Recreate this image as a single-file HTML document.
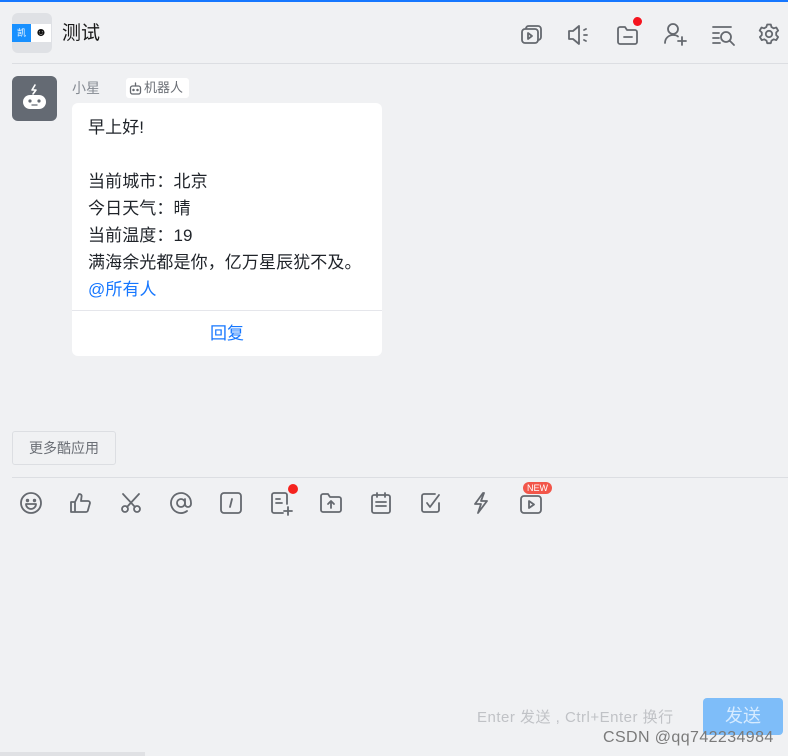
<!DOCTYPE html>
<html><head><meta charset="utf-8"><style>
*{margin:0;padding:0;box-sizing:border-box}
body{width:788px;height:756px;background:#f0f1f3;font-family:"Liberation Sans","Noto Sans CJK SC",sans-serif;position:relative;overflow:hidden}
.abs{position:absolute}
svg{fill:none;stroke:#65696f;stroke-width:1.8;stroke-linecap:round;stroke-linejoin:round}
</style></head><body>
<div class="abs" style="left:0;top:0;width:788px;height:2px;background:#1677ff"></div>
<div class="abs" style="left:12px;top:13px;width:40px;height:40px;border-radius:6px;background:#dfe1e5;overflow:hidden">
 <div class="abs" style="left:0;top:11px;width:19px;height:18px;background:#1890ff;color:#fff;font-size:9px;line-height:18px;text-align:center">凯</div>
 <div class="abs" style="left:19px;top:11px;width:20px;height:18px;background:#fff;color:#111;font-size:12px;line-height:16px;text-align:center">☻</div>
</div>
<div class="abs" style="left:62px;top:22px;font-size:19px;color:#1a1a1a;line-height:24px">测试</div>
<svg class="abs" style="left:520px;top:23px" width="24" height="24" viewBox="0 0 24 24"><rect x="2" y="6" width="16" height="14" rx="3"/><path d="M6 5 a3 3 0 0 1 3-2 h9 a3 3 0 0 1 3 3 v8 a3 3 0 0 1-3 3"/><path d="M8 10 l4 3 -4 3z"/></svg>
<svg class="abs" style="left:566px;top:23px" width="26" height="24" viewBox="0 0 26 24"><path d="M3 8h4l6-5v18l-6-5H3z"/><path d="M18 7l2-1M18 12h3M18 17l2 1"/></svg>
<svg class="abs" style="left:615px;top:23px" width="26" height="24" viewBox="0 0 26 24"><path d="M3 6a2 2 0 0 1 2-2h5l2 3h8a2 2 0 0 1 2 2v10a2 2 0 0 1-2 2H5a2 2 0 0 1-2-2z"/><path d="M9 14h8"/></svg>
<div class="abs" style="left:633px;top:17px;width:9px;height:9px;border-radius:50%;background:#f5141e"></div>
<svg class="abs" style="left:663px;top:22px" width="26" height="26" viewBox="0 0 26 26"><circle cx="10" cy="7" r="5"/><path d="M2 21c0-5 4-8 8-8 2 0 4 .5 5 1.5"/><path d="M19 15v8M15 19h8"/></svg>
<svg class="abs" style="left:711px;top:24px" width="26" height="24" viewBox="0 0 26 24"><path d="M2 3h18M2 9h6M2 14h6M2 19h7"/><circle cx="15" cy="13" r="5"/><path d="M19 17l4 4"/></svg>
<svg class="abs" style="left:757px;top:22px" width="24" height="24" viewBox="0 0 24 24"><circle cx="12" cy="12" r="3.2"/><path d="M10.2 2.5h3.6l.7 2.6 2.2 1.2 2.6-.8 1.8 3.1-1.9 1.9v2.6l1.9 1.9-1.8 3.1-2.6-.8-2.2 1.3-.7 2.6h-3.6l-.7-2.6-2.2-1.3-2.6.8-1.8-3.1 1.9-1.9v-2.6L2.7 8.6l1.8-3.1 2.6.8 2.2-1.2z"/></svg>
<div class="abs" style="left:12px;top:63px;width:776px;height:1px;background:#dcdee2"></div>
<div class="abs" style="left:12px;top:76px;width:45px;height:45px;border-radius:6px;background:#646a73">
 <svg class="abs" style="left:6px;top:6px" width="33" height="33" viewBox="0 0 33 33"><path d="M17 3l-3 5h4l-3 4" stroke="#fff" stroke-width="1.6"/><rect x="5" y="13" width="23" height="14" rx="7" fill="#fff" stroke="none"/><circle cx="12" cy="19" r="1.6" fill="#646a73" stroke="none"/><circle cx="21" cy="19" r="1.6" fill="#646a73" stroke="none"/><path d="M14 23h5" stroke="#646a73" stroke-width="1.3"/></svg>
</div>
<div class="abs" style="left:72px;top:79px;font-size:14px;color:#858a92;line-height:18px">小星</div>
<div class="abs" style="left:126px;top:78px;height:20px;width:63px;background:#fff;border-radius:3px;font-size:13px;color:#6b6f76;line-height:20px;padding-left:18px">机器人
 <svg class="abs" style="left:3px;top:4px;stroke-width:1.3" width="13" height="13" viewBox="0 0 13 13"><rect x="1.5" y="4" width="10" height="8" rx="2"/><path d="M6.5 1v3"/><circle cx="4.5" cy="8" r=".6"/><circle cx="8.5" cy="8" r=".6"/></svg></div>
<div class="abs" style="left:72px;top:103px;width:310px;height:253px;background:#fff;border-radius:6px">
 <div style="padding:11px 0 0 16px;font-size:17px;line-height:27px;color:#1f2329;letter-spacing:0.1px">早上好!<br><br>当前城市：北京<br>今日天气：晴<br>当前温度：19<br>满海余光都是你，亿万星辰犹不及。<br><span style="color:#1677ff">@所有人</span></div>
 <div class="abs" style="left:0;top:207px;width:310px;height:1px;background:#e5e6eb"></div>
 <div class="abs" style="left:0;top:219px;width:310px;text-align:center;font-size:17px;color:#1677ff;line-height:24px">回复</div>
</div>
<div class="abs" style="left:12px;top:431px;width:104px;height:34px;border:1px solid #dcdee2;border-radius:3px;font-size:14px;color:#6b6f76;line-height:32px;text-align:center">更多酷应用</div>
<div class="abs" style="left:12px;top:477px;width:776px;height:1px;background:#dcdee2"></div>
<svg class="abs" style="left:19px;top:491px" width="24" height="24" viewBox="0 0 24 24"><circle cx="12" cy="12" r="10"/><circle cx="8.5" cy="9.5" r=".8"/><circle cx="15.5" cy="9.5" r=".8"/><path d="M7 13h10a5 5 0 0 1-10 0z"/></svg>
<svg class="abs" style="left:69px;top:491px" width="24" height="24" viewBox="0 0 24 24"><path d="M2 11h4v10H2zM6 11l4-8c2 0 3 1 2.5 3L12 10h7a2 2 0 0 1 2 2l-2 7a2 2 0 0 1-2 2H6"/></svg>
<svg class="abs" style="left:119px;top:491px" width="24" height="24" viewBox="0 0 24 24"><circle cx="6" cy="18" r="3"/><circle cx="18" cy="18" r="3"/><path d="M4 3l12 13M20 3L8 16"/></svg>
<svg class="abs" style="left:169px;top:491px" width="24" height="24" viewBox="0 0 24 24"><circle cx="12" cy="12" r="4"/><path d="M16 8v5a3 3 0 0 0 6 0v-1a10 10 0 1 0-4 8"/></svg>
<svg class="abs" style="left:219px;top:491px" width="24" height="24" viewBox="0 0 24 24"><rect x="2" y="2" width="20" height="20" rx="3"/><path d="M13 8l-2 8"/></svg>
<svg class="abs" style="left:269px;top:491px" width="24" height="26" viewBox="0 0 24 26"><path d="M14 22H5a2 2 0 0 1-2-2V4a2 2 0 0 1 2-2h11a2 2 0 0 1 2 2v9"/><path d="M7 8h4M7 12h6M19 16v8M15 20h8"/></svg>
<div class="abs" style="left:288px;top:484px;width:10px;height:10px;border-radius:50%;background:#f5231e"></div>
<svg class="abs" style="left:319px;top:491px" width="24" height="24" viewBox="0 0 24 24"><path d="M2 5a2 2 0 0 1 2-2h5l2 3h9a2 2 0 0 1 2 2v11a2 2 0 0 1-2 2H4a2 2 0 0 1-2-2z"/><path d="M12 17v-7M9 13l3-3 3 3"/></svg>
<svg class="abs" style="left:369px;top:491px" width="24" height="24" viewBox="0 0 24 24"><rect x="3" y="4" width="18" height="18" rx="2"/><path d="M8 2v4M16 2v4M7 11h10M7 15h10"/></svg>
<svg class="abs" style="left:419px;top:491px" width="24" height="24" viewBox="0 0 24 24"><path d="M20 12v7a2 2 0 0 1-2 2H5a2 2 0 0 1-2-2V5a2 2 0 0 1 2-2h11"/><path d="M8 12l3 4 9-12"/></svg>
<svg class="abs" style="left:469px;top:491px" width="24" height="24" viewBox="0 0 24 24"><path d="M14 2L6 13h6l-3 9 9-12h-6l3-8z"/></svg>
<svg class="abs" style="left:519px;top:491px" width="24" height="24" viewBox="0 0 24 24"><rect x="2" y="5" width="20" height="17" rx="3"/><path d="M10 10l5 3.5-5 3.5z"/></svg>
<div class="abs" style="left:523px;top:482px;width:29px;height:12px;border-radius:6px;background:#f2564a;color:#fff;font-size:9px;line-height:12px;text-align:center">NEW</div>
<div class="abs" style="left:477px;top:709px;font-size:15px;color:#c0c2c6;line-height:18px;letter-spacing:0.5px">Enter 发送 , Ctrl+Enter 换行</div>
<div class="abs" style="left:703px;top:698px;width:80px;height:37px;border-radius:4px;background:#7ebdf9;color:#d6ebff;font-size:18px;line-height:37px;text-align:center">发送</div>
<div class="abs" style="left:603px;top:728px;font-size:16px;color:#7a7a7a;line-height:20px;letter-spacing:0.4px">CSDN @qq742234984</div>
<div class="abs" style="left:0;top:752px;width:145px;height:4px;background:#e0e1e4"></div>
</body></html>
